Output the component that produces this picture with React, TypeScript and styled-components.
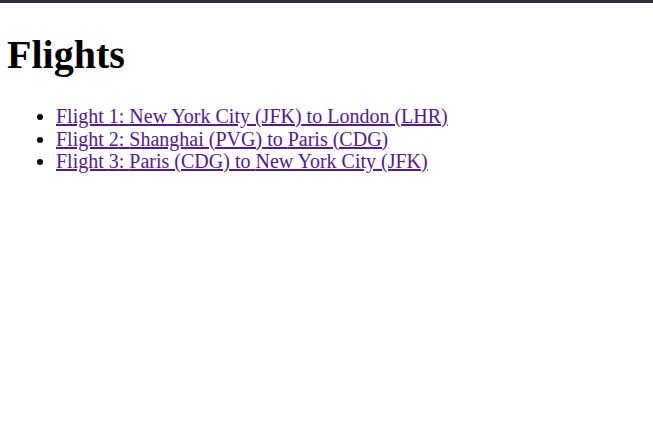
import React from 'react'
import styled, { createGlobalStyle } from 'styled-components'

const GlobalStyle = createGlobalStyle`
    html {
        border-top: 3px solid #2d3039;
    }

    body {
        margin: 8px 7px;
        font-family: "Liberation Serif", "Times New Roman", serif;
        font-size: 20px;
        color: #000;
        background: #fff;
    }
`

const Title = styled.h1`
    font-size: 40px;
    font-weight: bold;
    margin: 20px 0 26px;
`

const FlightList = styled.ul`
    margin: 27px 0 26px;
    padding-left: 49px;
    list-style: disc;
    line-height: 22.6px;
`

const FlightLink = styled.a`
    color: #551a8b;
    text-decoration: underline;
`

type Flight = {
    id: number
    origin: string
    destination: string
}

const flights: Flight[] = [
    { id: 1, origin: 'New York City (JFK)', destination: 'London (LHR)' },
    { id: 2, origin: 'Shanghai (PVG)', destination: 'Paris (CDG)' },
    { id: 3, origin: 'Paris (CDG)', destination: 'New York City (JFK)' }
]

export default function App() {
    return (
        <>
            <GlobalStyle />
            <Title>Flights</Title>
            <FlightList>
                {flights.map(flight => (
                    <li key={flight.id}>
                        <FlightLink href={`#flight-${flight.id}`}>
                            Flight {flight.id}: {flight.origin} to {flight.destination}
                        </FlightLink>
                    </li>
                ))}
            </FlightList>
        </>
    )
}
